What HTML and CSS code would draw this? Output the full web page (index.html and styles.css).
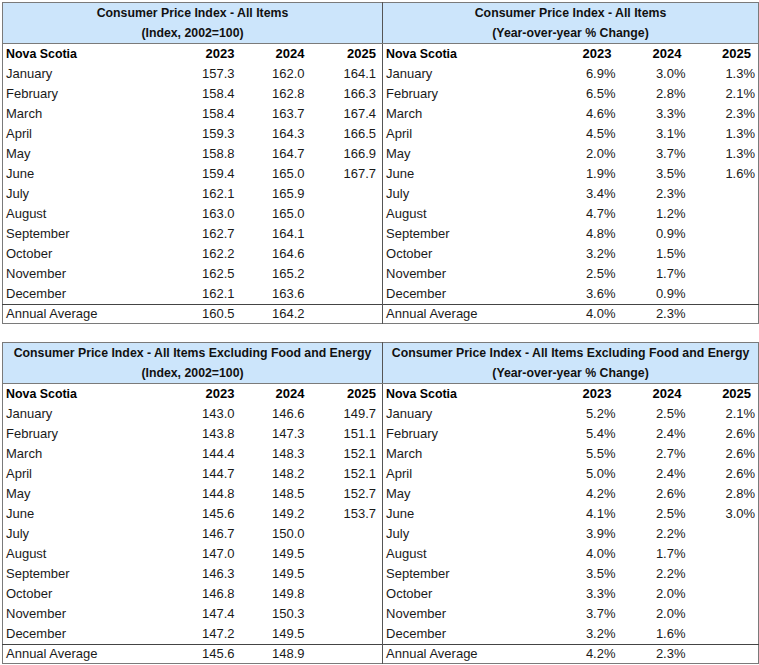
FILE: index.html
```html
<!DOCTYPE html>
<html>
<head>
<meta charset="utf-8">
<link rel="stylesheet" href="styles.css">
</head>
<body>
<div class="page">
  <table class="cpi">
    <colgroup>
      <col class="c-label-l"><col class="c-num"><col class="c-num"><col class="c-num-last">
      <col class="c-label-r"><col class="c-num"><col class="c-num"><col class="c-num">
    </colgroup>
    <tr class="title">
      <th colspan="4">Consumer Price Index - All Items<br>(Index, 2002=100)</th>
      <th colspan="4" class="div">Consumer Price Index - All Items<br>(Year-over-year % Change)</th>
    </tr>
    <tr class="head">
      <td class="lbl">Nova Scotia</td><td>2023</td><td>2024</td><td>2025</td>
      <td class="lbl div">Nova Scotia</td><td class="ph">2023</td><td class="ph">2024</td><td class="ph">2025</td>
    </tr>
    <tr><td class="lbl">January</td><td>157.3</td><td>162.0</td><td>164.1</td><td class="lbl div">January</td><td class="pc">6.9%</td><td class="pc">3.0%</td><td class="pc">1.3%</td></tr>
    <tr><td class="lbl">February</td><td>158.4</td><td>162.8</td><td>166.3</td><td class="lbl div">February</td><td class="pc">6.5%</td><td class="pc">2.8%</td><td class="pc">2.1%</td></tr>
    <tr><td class="lbl">March</td><td>158.4</td><td>163.7</td><td>167.4</td><td class="lbl div">March</td><td class="pc">4.6%</td><td class="pc">3.3%</td><td class="pc">2.3%</td></tr>
    <tr><td class="lbl">April</td><td>159.3</td><td>164.3</td><td>166.5</td><td class="lbl div">April</td><td class="pc">4.5%</td><td class="pc">3.1%</td><td class="pc">1.3%</td></tr>
    <tr><td class="lbl">May</td><td>158.8</td><td>164.7</td><td>166.9</td><td class="lbl div">May</td><td class="pc">2.0%</td><td class="pc">3.7%</td><td class="pc">1.3%</td></tr>
    <tr><td class="lbl">June</td><td>159.4</td><td>165.0</td><td>167.7</td><td class="lbl div">June</td><td class="pc">1.9%</td><td class="pc">3.5%</td><td class="pc">1.6%</td></tr>
    <tr><td class="lbl">July</td><td>162.1</td><td>165.9</td><td></td><td class="lbl div">July</td><td class="pc">3.4%</td><td class="pc">2.3%</td><td class="pc"></td></tr>
    <tr><td class="lbl">August</td><td>163.0</td><td>165.0</td><td></td><td class="lbl div">August</td><td class="pc">4.7%</td><td class="pc">1.2%</td><td class="pc"></td></tr>
    <tr><td class="lbl">September</td><td>162.7</td><td>164.1</td><td></td><td class="lbl div">September</td><td class="pc">4.8%</td><td class="pc">0.9%</td><td class="pc"></td></tr>
    <tr><td class="lbl">October</td><td>162.2</td><td>164.6</td><td></td><td class="lbl div">October</td><td class="pc">3.2%</td><td class="pc">1.5%</td><td class="pc"></td></tr>
    <tr><td class="lbl">November</td><td>162.5</td><td>165.2</td><td></td><td class="lbl div">November</td><td class="pc">2.5%</td><td class="pc">1.7%</td><td class="pc"></td></tr>
    <tr><td class="lbl">December</td><td>162.1</td><td>163.6</td><td></td><td class="lbl div">December</td><td class="pc">3.6%</td><td class="pc">0.9%</td><td class="pc"></td></tr>
    <tr class="avg"><td class="lbl">Annual Average</td><td>160.5</td><td>164.2</td><td></td><td class="lbl div">Annual Average</td><td class="pc">4.0%</td><td class="pc">2.3%</td><td class="pc"></td></tr>
  </table>

  <table class="cpi">
    <colgroup>
      <col class="c-label-l"><col class="c-num"><col class="c-num"><col class="c-num-last">
      <col class="c-label-r"><col class="c-num"><col class="c-num"><col class="c-num">
    </colgroup>
    <tr class="title">
      <th colspan="4">Consumer Price Index - All Items Excluding Food and Energy<br>(Index, 2002=100)</th>
      <th colspan="4" class="div">Consumer Price Index - All Items Excluding Food and Energy<br>(Year-over-year % Change)</th>
    </tr>
    <tr class="head">
      <td class="lbl">Nova Scotia</td><td>2023</td><td>2024</td><td>2025</td>
      <td class="lbl div">Nova Scotia</td><td class="ph">2023</td><td class="ph">2024</td><td class="ph">2025</td>
    </tr>
    <tr><td class="lbl">January</td><td>143.0</td><td>146.6</td><td>149.7</td><td class="lbl div">January</td><td class="pc">5.2%</td><td class="pc">2.5%</td><td class="pc">2.1%</td></tr>
    <tr><td class="lbl">February</td><td>143.8</td><td>147.3</td><td>151.1</td><td class="lbl div">February</td><td class="pc">5.4%</td><td class="pc">2.4%</td><td class="pc">2.6%</td></tr>
    <tr><td class="lbl">March</td><td>144.4</td><td>148.3</td><td>152.1</td><td class="lbl div">March</td><td class="pc">5.5%</td><td class="pc">2.7%</td><td class="pc">2.6%</td></tr>
    <tr><td class="lbl">April</td><td>144.7</td><td>148.2</td><td>152.1</td><td class="lbl div">April</td><td class="pc">5.0%</td><td class="pc">2.4%</td><td class="pc">2.6%</td></tr>
    <tr><td class="lbl">May</td><td>144.8</td><td>148.5</td><td>152.7</td><td class="lbl div">May</td><td class="pc">4.2%</td><td class="pc">2.6%</td><td class="pc">2.8%</td></tr>
    <tr><td class="lbl">June</td><td>145.6</td><td>149.2</td><td>153.7</td><td class="lbl div">June</td><td class="pc">4.1%</td><td class="pc">2.5%</td><td class="pc">3.0%</td></tr>
    <tr><td class="lbl">July</td><td>146.7</td><td>150.0</td><td></td><td class="lbl div">July</td><td class="pc">3.9%</td><td class="pc">2.2%</td><td class="pc"></td></tr>
    <tr><td class="lbl">August</td><td>147.0</td><td>149.5</td><td></td><td class="lbl div">August</td><td class="pc">4.0%</td><td class="pc">1.7%</td><td class="pc"></td></tr>
    <tr><td class="lbl">September</td><td>146.3</td><td>149.5</td><td></td><td class="lbl div">September</td><td class="pc">3.5%</td><td class="pc">2.2%</td><td class="pc"></td></tr>
    <tr><td class="lbl">October</td><td>146.8</td><td>149.8</td><td></td><td class="lbl div">October</td><td class="pc">3.3%</td><td class="pc">2.0%</td><td class="pc"></td></tr>
    <tr><td class="lbl">November</td><td>147.4</td><td>150.3</td><td></td><td class="lbl div">November</td><td class="pc">3.7%</td><td class="pc">2.0%</td><td class="pc"></td></tr>
    <tr><td class="lbl">December</td><td>147.2</td><td>149.5</td><td></td><td class="lbl div">December</td><td class="pc">3.2%</td><td class="pc">1.6%</td><td class="pc"></td></tr>
    <tr class="avg"><td class="lbl">Annual Average</td><td>145.6</td><td>148.9</td><td></td><td class="lbl div">Annual Average</td><td class="pc">4.2%</td><td class="pc">2.3%</td><td class="pc"></td></tr>
  </table>
</div>
</body>
</html>
```
FILE: styles.css
```css
html, body {
  margin: 0;
  padding: 0;
  background: #ffffff;
}

.page {
  display: flex;
  flex-direction: column;
  gap: 18px;
  padding: 2px 0 0 2px;
  font-family: "Liberation Sans", Arial, sans-serif;
  color: #1a1a1a;
}

.cpi {
  border-collapse: collapse;
  table-layout: fixed;
  width: 756px;
  border: 1px solid #7a7a7a;
}

.c-label-l { width: 168px; }
.c-num { width: 70px; }
.c-num-last { width: 72px; }
.c-label-r { width: 166px; }

.cpi th,
.cpi td {
  padding: 0 6px 0 3px;
  height: 20px;
  line-height: 20px;
  font-size: 13px;
  text-align: right;
  white-space: nowrap;
  overflow: visible;
}

.cpi td.lbl {
  text-align: left;
}

.cpi .div {
  border-left: 1px solid #555555;
}

.cpi .title th {
  background: #cce5fb;
  color: #111111;
  text-align: center;
  font-size: 12.3px;
  font-weight: bold;
  height: 40px;
  padding: 0;
  border-bottom: 1px solid #7a7a7a;
}

.cpi .head td {
  font-weight: bold;
  color: #000000;
}

.cpi .head td.lbl {
  font-size: 12.4px;
}

.cpi td.ph {
  padding-right: 7px;
}

.cpi td.pc {
  padding-right: 3px;
}

.cpi .avg td {
  border-top: 1px solid #444444;
  height: 18px;
  line-height: 18px;
}
```
